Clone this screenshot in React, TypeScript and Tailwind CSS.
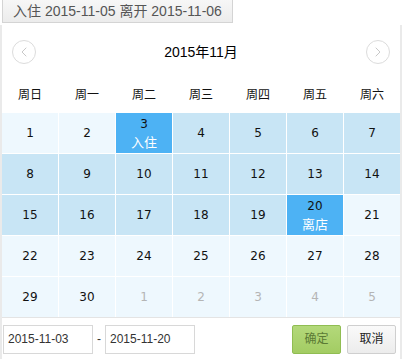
import { ChevronLeft, ChevronRight } from "lucide-react";

type Day = { n: number; other?: boolean; tag?: string };

const weeks: Day[][] = [
  [1, 2, 3, 4, 5, 6, 7].map((n) => ({ n })),
  [8, 9, 10, 11, 12, 13, 14].map((n) => ({ n })),
  [15, 16, 17, 18, 19, 20, 21].map((n) => ({ n })),
  [22, 23, 24, 25, 26, 27, 28].map((n) => ({ n })),
  [
    { n: 29 },
    { n: 30 },
    { n: 1, other: true },
    { n: 2, other: true },
    { n: 3, other: true },
    { n: 4, other: true },
    { n: 5, other: true },
  ],
];

const weekNames = ["周日", "周一", "周二", "周三", "周四", "周五", "周六"];

const cellClass = (d: Day) => {
  if (d.other) return "bg-[#eef8fe] text-[#b5b5b5]";
  if (d.n === 3 || d.n === 20) return "bg-[#4db2f4] text-[#111]";
  if (d.n > 3 && d.n < 20) return "bg-[#c8e5f5] text-[#111]";
  return "bg-[#eef8fe] text-[#111]";
};

const App = () => {
  weeks[0][2].tag = "入住";
  weeks[2][5].tag = "离店";

  return (
    <div
      className="w-[404px] h-[359px] bg-white overflow-hidden"
      style={{ fontFamily: '"Liberation Sans", "Noto Sans CJK SC", sans-serif' }}
    >
      <div className="ml-[2px] w-[231px] h-[23px] border border-[#d4d4d4] border-t-0 bg-gradient-to-b from-[#f7f7f7] to-[#ececec] text-[14px] leading-[22px] text-[#555] text-center whitespace-nowrap">
        入住 2015-11-05 离开 2015-11-06
      </div>
      <div className="mt-[2px] ml-0 w-[402px] h-[334px] border-l-2 border-r-2 border-[#eaeaea] flex flex-col">
        <div className="h-[52px] flex items-center justify-between px-[10px] pt-[2px]">
          <div className="w-[24px] h-[24px] rounded-full border border-[#dcdcdc] flex items-center justify-center text-[#c8c8c8]">
            <ChevronLeft size={16} strokeWidth={1.5} />
          </div>
          <div className="text-[14px] text-black">2015年11月</div>
          <div className="w-[24px] h-[24px] rounded-full border border-[#dcdcdc] flex items-center justify-center text-[#c8c8c8]">
            <ChevronRight size={16} strokeWidth={1.5} />
          </div>
        </div>
        <div className="grid grid-cols-7 gap-x-px h-[36px] items-center text-[12px] text-[#111]">
          {weekNames.map((w) => (
            <div key={w} className="text-center">
              {w}
            </div>
          ))}
        </div>
        <div
          className="grid grid-cols-7 gap-px text-[12px]"
          style={{ fontFamily: '"DejaVu Sans", "Noto Sans CJK SC", sans-serif' }}
        >
          {weeks.flat().map((d, i) => (
            <div
              key={i}
              className={`h-[40px] flex flex-col items-center justify-center ${cellClass(d)}`}
            >
              <span className="leading-[17px]">{d.n}</span>
              {d.tag && (
                <span
                  className="text-white text-[13px] leading-[18px]"
                  style={{ fontFamily: '"Noto Sans CJK SC", sans-serif' }}
                >
                  {d.tag}
                </span>
              )}
            </div>
          ))}
        </div>
        <div className="flex-1 border-t border-[#e4e4e4] flex items-center pl-px pr-[4px] pt-px">
          <div className="w-[90px] h-[29px] border border-[#d8d8d8] text-[12px] text-[#333] leading-[27px] px-[4px]">
            2015-11-03
          </div>
          <span className="w-[12px] text-center text-[12px] text-[#333]">-</span>
          <div className="w-[90px] h-[29px] border border-[#d8d8d8] text-[12px] text-[#333] leading-[27px] px-[4px]">
            2015-11-20
          </div>
          <div className="ml-auto w-[49px] h-[29px] rounded-[2px] border border-[#90bd52] bg-gradient-to-b from-[#b3d97a] to-[#a3cc63] text-[12px] text-[#5b7a35] flex items-center justify-center">
            确定
          </div>
          <div className="ml-[6px] w-[49px] h-[29px] rounded-[2px] border border-[#cfcfcf] bg-gradient-to-b from-[#fafafa] to-[#ececec] text-[12px] text-[#222] flex items-center justify-center">
            取消
          </div>
        </div>
      </div>
    </div>
  );
};

export default App;
